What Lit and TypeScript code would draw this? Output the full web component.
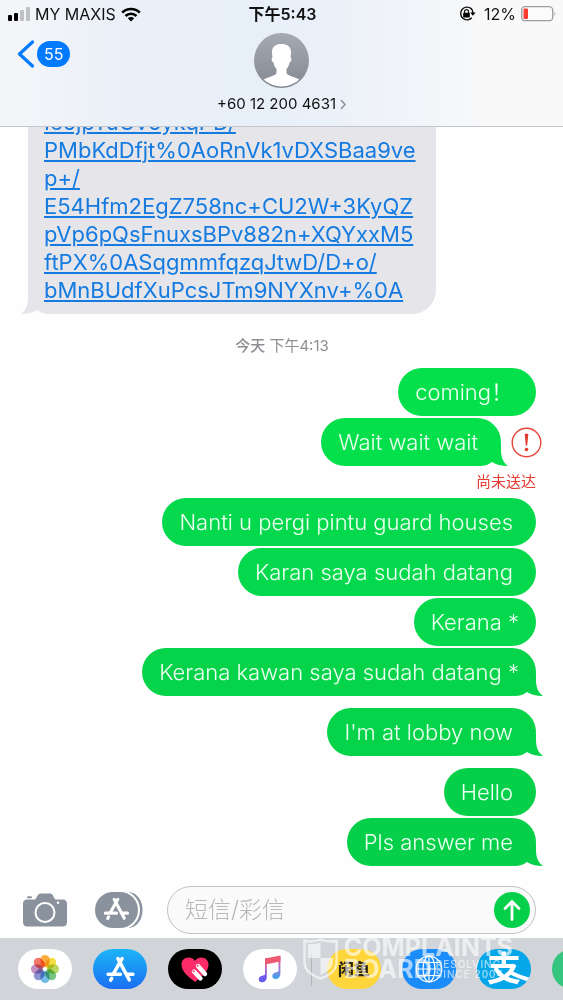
import { LitElement, html, svg, css, nothing } from "lit";
import { customElement, property } from "lit/decorators.js";

interface Message {
  text: string;
  tail?: boolean;
  failed?: boolean;
}

const LINK_LINES = [
  "Ie5jpTuOv5ykqPD/",
  "PMbKdDfjt%0AoRnVk1vDXSBaa9ve",
  "p+/",
  "E54Hfm2EgZ758nc+CU2W+3KyQZ",
  "pVp6pQsFnuxsBPv882n+XQYxxM5",
  "ftPX%0ASqgmmfqzqJtwD/D+o/",
  "bMnBUdfXuPcsJTm9NYXnv+%0A",
];

const MESSAGES: Message[] = [
  { text: "coming！" },
  { text: "Wait wait wait", tail: true, failed: true },
  { text: "Nanti u pergi pintu guard houses" },
  { text: "Karan saya sudah datang" },
  { text: "Kerana *" },
  { text: "Kerana kawan saya sudah datang *", tail: true },
  { text: "I'm at lobby now", tail: true },
  { text: "Hello" },
  { text: "Pls answer me", tail: true },
];

const tailShape = html`<svg class="tail" viewBox="0 0 29 22" width="29" height="22" aria-hidden="true">
  <path fill="currentColor" d="M22 0V6C22 13 24 18.500 29 22C22 22 17 20.500 13 18C9 21 5 22 0 22V0Z" />
</svg>`;

const appStoreMark = svg`
  <g fill="none" stroke="#fff" stroke-width="3.400" stroke-linecap="round">
    <path d="M14.500 2L6.500 16M10.500 2L21.500 22.500" />
    <path d="M1 17H13M19.500 17H25M4.500 21L3.500 22.800" />
  </g>`;

@customElement("status-bar")
export class StatusBar extends LitElement {
  static styles = css`
    :host {
      display: grid;
      grid-template-columns: 1fr auto 1fr;
      align-items: center;
      height: 28px;
      padding: 0 6px 0 8px;
      font-size: 16px;
      line-height: 20px;
      color: #111;
    }
    .side { display: flex; align-items: center; gap: 5px; }
    .right { justify-content: flex-end; }
    .lock { margin-right: 3px; }
    .time { font-weight: 600; }
    svg { display: block; flex: none; }
  `;

  render() {
    return html`
      <div class="side">
        <svg width="22" height="14" viewBox="0 0 22 14" aria-hidden="true">
          <rect x="0" y="8" width="4" height="6" rx="1" fill="#000" />
          <rect x="6" y="6" width="4" height="8" rx="1" fill="#000" />
          <rect x="12" y="3" width="4" height="11" rx="1" fill="#bfc1c6" />
          <rect x="18" y="0" width="4" height="14" rx="1" fill="#bfc1c6" />
        </svg>
        <span>MY MAXIS</span>
        <svg width="20" height="15" viewBox="0 0 20 15" aria-hidden="true">
          <g fill="none" stroke="#000" stroke-width="2.600">
            <path d="M1.200 5.600A12.500 12.500 0 0 1 18.800 5.600" />
            <path d="M4.500 9A7.800 7.800 0 0 1 15.500 9" />
          </g>
          <path d="M10 14.500L6.800 11.200A4.600 4.600 0 0 1 13.200 11.200Z" />
        </svg>
      </div>
      <span class="time">下午5:43</span>
      <div class="side right">
        <svg class="lock" width="17" height="16" viewBox="0 0 17 16" aria-hidden="true">
          <path d="M12.200 2.600A6.400 6.400 0 1 0 12.800 11.800M12.200 2.600A6.400 6.400 0 0 1 13.900 7" fill="none" stroke="#111" stroke-width="1.400" />
          <path d="M11.200 6.600H16.600L13.900 9.800Z" />
          <rect x="4.200" y="6.800" width="6.600" height="4.800" rx=".6" />
          <path d="M5.500 7.500V5.600A2 2 0 0 1 9.500 5.600V7.500" fill="none" stroke="#111" stroke-width="1.200" />
        </svg>
        <span>12%</span>
        <svg width="36" height="16" viewBox="0 0 36 16" aria-hidden="true">
          <rect x=".7" y=".7" width="31" height="14" rx="3.500" fill="#fbfbfc" stroke="#9b9ca0" stroke-width="1.300" />
          <rect x="2.500" y="2.500" width="4.500" height="10.500" rx="1" fill="#fb3b30" />
          <path d="M33.500 5.200Q35.300 7.700 33.500 10.200Z" fill="#9b9ca0" />
        </svg>
      </div>
    `;
  }
}

@customElement("chat-header")
export class ChatHeader extends LitElement {
  static styles = css`
    :host {
      display: block;
      background: linear-gradient(90deg, #f5f6f9 0%, #eaf0f8 22%, #e7eff9 48%, #f1f4f9 72%, #f9f9f9 88%);
      border-bottom: 1px solid #c3c6cb;
    }
    .bar {
      display: grid;
      grid-template-columns: 1fr auto 1fr;
      align-items: start;
      padding: 5px 17px 12px;
    }
    button { font: inherit; color: inherit; border: 0; background: none; padding: 0; cursor: pointer; }
    .back { display: flex; align-items: center; gap: 2px; justify-self: start; margin-top: 7px; }
    .count {
      background: #007aff;
      color: #fff;
      border-radius: 13px;
      font-size: 16px;
      line-height: 26px;
      padding: 0 7px;
    }
    .contact { display: flex; flex-direction: column; align-items: center; gap: 6px; }
    .name { display: flex; align-items: center; gap: 4px; font-size: 15px; line-height: 20px; color: #111; }
    svg { display: block; }
  `;

  render() {
    return html`
      <status-bar></status-bar>
      <div class="bar">
        <button class="back" aria-label="返回">
          <svg width="18" height="28" viewBox="0 0 18 28" aria-hidden="true">
            <path d="M15.500 2L2.500 14L15.500 26" fill="none" stroke="#007aff" stroke-width="3.200" stroke-linecap="round" stroke-linejoin="round" />
          </svg>
          <span class="count">55</span>
        </button>
        <button class="contact">
          <svg width="55" height="55" viewBox="0 0 55 55" aria-hidden="true">
            <defs>
              <linearGradient id="avatar" x1="0" y1="0" x2="0" y2="1">
                <stop offset="0" stop-color="#a5a9b2" />
                <stop offset="1" stop-color="#858992" />
              </linearGradient>
              <clipPath id="disc"><circle cx="27.500" cy="27.500" r="26" /></clipPath>
            </defs>
            <circle cx="27.500" cy="27.500" r="27.500" fill="url(#avatar)" />
            <path clip-path="url(#disc)" fill="#fff" d="M27.500 11C22 11 18 13.500 18 19C18 21 18.200 22.500 18.500 24.500C17 25 17.500 29 19.500 29.500C20 32.500 21 34.500 22.500 36V40C22 43 12 44 7.500 48V56H47.500V48C43 44 33 43 32.500 40V36C34 34.500 35 32.500 35.500 29.500C37.500 29 38 25 36.500 24.500C36.800 22.500 37 21 37 19C37 13.500 33 11 27.500 11Z" />
          </svg>
          <span class="name">+60 12 200 4631
            <svg width="6" height="11" viewBox="0 0 6 11" aria-hidden="true">
              <path d="M1 1L5 5.500L1 10" fill="none" stroke="#8e9096" stroke-width="1.500" />
            </svg>
          </span>
        </button>
      </div>
    `;
  }
}

@customElement("chat-bubble")
export class ChatBubble extends LitElement {
  @property({ attribute: false }) message: Message = { text: "" };

  static styles = css`
    :host { display: flex; flex-direction: column; align-items: flex-end; }
    .row { display: flex; align-items: center; gap: 10px; }
    .failed { margin-right: -6px; }
    .bubble {
      position: relative;
      background: var(--green, #04d94b);
      color: var(--green, #04d94b);
      border-radius: 24px;
      padding: 10px 23px 10px 17px;
      font-size: 22px;
      font-weight: 360;
      line-height: 28px;
    }
    .starred { padding-right: 17px; }
    .text { position: relative; color: #edfff2; }
    .tail { position: absolute; right: -7px; bottom: 0; }
    .alert { border: 0; background: none; padding: 0; cursor: pointer; }
    .alert svg { display: block; }
    .note { font-size: 15px; font-weight: 400; line-height: 32px; color: #e23b30; }
  `;

  render() {
    const { text, tail, failed } = this.message;
    return html`
      <div class="row ${failed ? "failed" : ""}">
        <div class="bubble ${text.endsWith("*") ? "starred" : ""}">${tail ? tailShape : nothing}<span class="text">${text}</span></div>
        ${failed
          ? html`<button class="alert" aria-label="尚未送达">
              <svg width="31" height="31" viewBox="0 0 31 31" aria-hidden="true">
                <circle cx="15.500" cy="15.500" r="14.300" fill="none" stroke="#e8453b" stroke-width="1.400" />
                <path d="M13.700 7.500Q15.500 5.500 17.300 7.500L16.200 18.500H14.800Z" fill="#e23b30" />
                <circle cx="15.500" cy="22.500" r="1.800" fill="#e23b30" />
              </svg>
            </button>`
          : nothing}
      </div>
      ${failed ? html`<span class="note">尚未送达</span>` : nothing}
    `;
  }
}

@customElement("chat-thread")
export class ChatThread extends LitElement {
  static styles = css`
    :host {
      display: flex;
      flex-direction: column;
      justify-content: flex-end;
      min-height: 0;
      overflow: hidden;
      padding: 0 27px 0 28px;
    }
    .incoming {
      position: relative;
      align-self: flex-start;
      background: #e5e5ea;
      color: #e5e5ea;
      border-radius: 24px;
      padding: 10px 20px 10px 16px;
      font-size: 22px;
      font-weight: 380;
      line-height: 28px;
    }
    .tail { position: absolute; left: -7px; bottom: 0; transform: scaleX(-1); }
    .link { position: relative; color: #157be0; text-decoration: underline 2px; text-underline-offset: 2px; }
    .line { display: block; }
    .date { text-align: center; font-size: 15px; line-height: 20px; padding: 22px 0 12px; color: #8e8e93; }
    .day { font-weight: 500; }
    .sent { display: flex; flex-direction: column; gap: 2px; }
    .space { margin-bottom: 10px; }
    .flush { margin-bottom: -2px; }
    .sent > :nth-child(n + 3) { --green: #04d84c; }
    .sent > :nth-child(n + 6) { --green: #05d44a; }
    .sent > :nth-child(n + 8) { --green: #06d04a; }
    .sent > :nth-child(-n + 2) { --green: #04df4c; }
  `;

  render() {
    return html`
      <div class="incoming">
        ${tailShape}<a class="link" href="#">${LINK_LINES.map((l) => html`<span class="line">${l}</span>`)}</a>
      </div>
      <div class="date"><span class="day">今天</span> 下午4:13</div>
      <div class="sent">
        ${MESSAGES.map((m, i) => {
          const last = i === MESSAGES.length - 1;
          const cls = m.failed ? "flush" : m.tail && !last ? "space" : "";
          return html`<chat-bubble class=${cls} .message=${m}></chat-bubble>`;
        })}
      </div>
    `;
  }
}

@customElement("compose-bar")
export class ComposeBar extends LitElement {
  static styles = css`
    :host { display: flex; align-items: center; padding: 20px 27px 4px 23px; }
    button { border: 0; background: none; padding: 0; cursor: pointer; flex: none; }
    svg { display: block; }
    .apps { margin: 0 24px 0 28px; }
    .field {
      flex: 1;
      min-width: 0;
      display: flex;
      align-items: center;
      box-sizing: border-box;
      height: 48px;
      border: 1px solid #c2c2c6;
      border-radius: 24px;
      background: #fafafa;
      padding: 0 5px 0 17px;
    }
    .input {
      flex: 1;
      min-width: 0;
      border: 0;
      outline: 0;
      padding: 0;
      background: none;
      font: inherit;
      font-size: 23px;
      line-height: 32px;
      color: #111;
    }
    .input::placeholder { color: #b8b8bc; opacity: 1; font-weight: 300; }
  `;

  render() {
    return html`
      <button aria-label="相机">
        <svg width="44" height="34" viewBox="0 0 44 34" aria-hidden="true">
          <path fill="#8a939d" d="M4 6.500H11.500C13.500 6.500 14 1 17 .5H27.500C30.500 1 31 6.500 33 6.500H39.500Q44 6.500 44 11V29Q44 33.500 39.500 33.500H4.500Q0 33.500 0 29V11Q0 6.500 4 6.500Z" />
          <rect x="4" y="3.300" width="5" height="2" rx="1" fill="#8a939d" />
          <circle cx="22" cy="19.500" r="9.500" fill="none" stroke="#fff" stroke-width="2" />
          <circle cx="35" cy="9.800" r="1.200" fill="#fff" />
        </svg>
      </button>
      <button class="apps" aria-label="应用">
        <svg width="48" height="36" viewBox="0 0 48 36" aria-hidden="true">
          <path d="M34 0C52 2 52 34 34 36Z" fill="#8a939d" />
          <rect x="-2" y="-2" width="47" height="40" rx="20" fill="#fff" />
          <rect x="0" y="0" width="43" height="36" rx="18" fill="#8a939d" />
          <g transform="translate(9.500 5.500) scale(.92)">${appStoreMark}</g>
        </svg>
      </button>
      <div class="field">
        <input class="input" type="text" aria-label="短信/彩信" placeholder="短信/彩信" />
        <button aria-label="发送">
          <svg width="36" height="36" viewBox="0 0 36 36" aria-hidden="true">
            <circle cx="18" cy="18" r="18" fill="#06cf49" />
            <path d="M18 27.500V10M11 16.500L18 9.500L25 16.500" fill="none" stroke="#fff" stroke-width="2.800" stroke-linecap="round" stroke-linejoin="round" />
          </svg>
        </button>
      </div>
    `;
  }
}

const PETALS = ["#fba32a", "#f2d92c", "#b0d44c", "#6cc07a", "#63b4e2", "#8089cc", "#bd84bd", "#f2695a"];

@customElement("app-drawer")
export class AppDrawer extends LitElement {
  static styles = css`
    :host {
      position: relative;
      display: flex;
      align-items: flex-start;
      gap: 21px;
      height: 51px;
      padding: 11px 0 0 18px;
      background: #d1d4d9;
    }
    .app {
      flex: none;
      display: grid;
      place-items: center;
      width: 54px;
      height: 40px;
      padding: 0;
      border: 0;
      border-radius: 20px;
      cursor: pointer;
      overflow: hidden;
      font: inherit;
    }
    .photos, .music { background: #fff; }
    .petal { mix-blend-mode: multiply; }
    .store { background: linear-gradient(#1cb5f8, #1a6ff2); }
    .touch { background: #000; }
    .fish { background: #fed53a; color: #2b2715; font-size: 16px; font-weight: 900; line-height: 20px; }
    .globe { background: #1b8dfb; }
    .pay { background: #06a6e8; color: #fff; font-size: 34px; font-weight: 700; line-height: 40px; position: relative; }
    .swoosh { position: absolute; right: 0; bottom: 4px; }
    .more { background: #35c57e; }
    .divider { flex: none; width: 1px; height: 32px; margin: 5px -6px 0 -7px; background: #b2b5ba; }
    svg { display: block; }
    .mark {
      position: absolute;
      right: 50px;
      top: 0;
      display: flex;
      align-items: flex-start;
      gap: 6px;
      color: #fff;
      opacity: .62;
      pointer-events: none;
    }
    .words { display: flex; flex-direction: column; font-size: 25px; font-weight: 700; }
    .top { line-height: 18px; }
    .second { display: flex; align-items: center; gap: 4px; line-height: 26px; }
    .small {
      width: 76px;
      font-size: 10px;
      font-weight: 500;
      line-height: 10px;
      white-space: nowrap;
      letter-spacing: 1px;
    }
    .small span { display: block; }
  `;

  render() {
    return html`
      <button class="app photos" aria-label="照片">
        <svg width="30" height="30" viewBox="-15 -15 30 30" aria-hidden="true">
          ${PETALS.map((c, i) => svg`<rect class="petal" x="-4.500" y="-14" width="9" height="12" rx="4.500" fill=${c} fill-opacity=".9" transform="rotate(${i * 45})" />`)}
        </svg>
      </button>
      <button class="app store" aria-label="App Store">
        <svg width="29" height="27" viewBox="-1 0 28 25" aria-hidden="true">${appStoreMark}</svg>
      </button>
      <button class="app touch" aria-label="Digital Touch">
        <svg width="28" height="25" viewBox="0 0 28 25" aria-hidden="true">
          <path fill="#fc2c68" d="M14 25C8 20 .5 15 .5 7.500C.5 3.500 3.500.5 7.500.5C10.500.5 13 2 14 4C15 2 17.500.5 20.500.5C24.500.5 27.500 3.500 27.500 7.500C27.500 15 20 20 14 25Z" />
          <g stroke="#fff" stroke-linecap="round" stroke-width="4.400">
            <path d="M17 9L24 17M13 14.500L19.500 21.500" />
          </g>
          <g fill="#fc2c68"><circle cx="16.700" cy="8.700" r="1" /><circle cx="12.700" cy="14.200" r="1" /></g>
        </svg>
      </button>
      <button class="app music" aria-label="音乐">
        <svg width="24" height="28" viewBox="0 0 24 28" aria-hidden="true">
          <defs>
            <linearGradient id="note" x1="0" y1="0" x2="0" y2="1">
              <stop offset="0" stop-color="#f3596b" />
              <stop offset=".4" stop-color="#c062b8" />
              <stop offset=".75" stop-color="#7a5af0" />
              <stop offset="1" stop-color="#5d5cf2" />
            </linearGradient>
            <linearGradient id="note2" x1="0" y1="0" x2="0" y2="1">
              <stop offset="0" stop-color="#f3596b" />
              <stop offset=".5" stop-color="#a874d0" />
              <stop offset="1" stop-color="#36a6ee" />
            </linearGradient>
          </defs>
          <path fill="url(#note)" d="M7 3.500L8.800 3V22C8.800 25.500 6.500 27.300 4 27.300C1.800 27.300.7 25.800.7 24.200C.7 22 2.500 20.800 4.800 20.500C6.300 20.300 7 20 7 18.500Z" />
          <path fill="url(#note2)" d="M20.500 1H22.400V18.500C22.400 22 20.200 24 17.600 24C15.500 24 14.300 22.500 14.300 20.900C14.300 18.800 16 17.500 18.300 17.200C19.800 17 20.500 16.500 20.500 15Z" />
          <path fill="#ee5a70" d="M7 3.500L22.400 .5V6.500L7 9.500Z" />
        </svg>
      </button>
      <span class="divider"></span>
      <button class="app fish">闲鱼</button>
      <button class="app globe" aria-label="浏览器">
        <svg width="28" height="28" viewBox="0 0 28 28" aria-hidden="true">
          <g fill="none" stroke="#fff" stroke-width="1.200">
            <circle cx="14" cy="14" r="12.800" /><ellipse cx="14" cy="14" rx="6" ry="12.800" />
            <path d="M14 1.200V26.800M1.200 14H26.800M3 7.500H25M3 20.500H25" />
          </g>
        </svg>
      </button>
      <button class="app pay"><span>支</span>
        <svg class="swoosh" width="30" height="14" viewBox="0 0 30 14" aria-hidden="true">
          <path d="M8 1Q18 6 29 9" fill="none" stroke="#fff" stroke-width="4" />
        </svg>
      </button>
      <button class="app more" aria-label="更多">
        <svg width="28" height="28" viewBox="0 0 28 28" aria-hidden="true"><rect x="1" y="3" width="26" height="22" rx="2" fill="#fff" /></svg>
      </button>
      <div class="mark">
        <svg width="35" height="42" viewBox="0 0 35 42" aria-hidden="true">
          <path d="M1.500 3Q10 4.500 17.500 1.500Q25 4.500 33.500 3V24Q33.500 35 17.500 40.500Q1.500 35 1.500 24Z" fill="none" stroke="#fff" stroke-width="2.400" />
          <path d="M5 6Q11 7 17.500 4.500V20H5ZM17.500 20H30V24Q30 32 17.500 37Z" fill="#fff" />
        </svg>
        <div class="words">
          <span class="top">COMPLAINTS</span>
          <span class="second">BOARD <span class="small"><span>RESOLVING</span><span>SINCE 2004</span></span></span>
        </div>
      </div>
    `;
  }
}

@customElement("app-root")
export class AppRoot extends LitElement {
  static styles = css`
    :host {
      display: flex;
      flex-direction: column;
      height: 100vh;
      overflow: hidden;
      background: #fefefe;
      font-family: Inter, "Noto Sans CJK SC", sans-serif;
    }
    chat-thread { flex: 1; }
  `;

  render() {
    return html`
      <chat-header></chat-header>
      <chat-thread></chat-thread>
      <compose-bar></compose-bar>
      <app-drawer></app-drawer>
    `;
  }
}
